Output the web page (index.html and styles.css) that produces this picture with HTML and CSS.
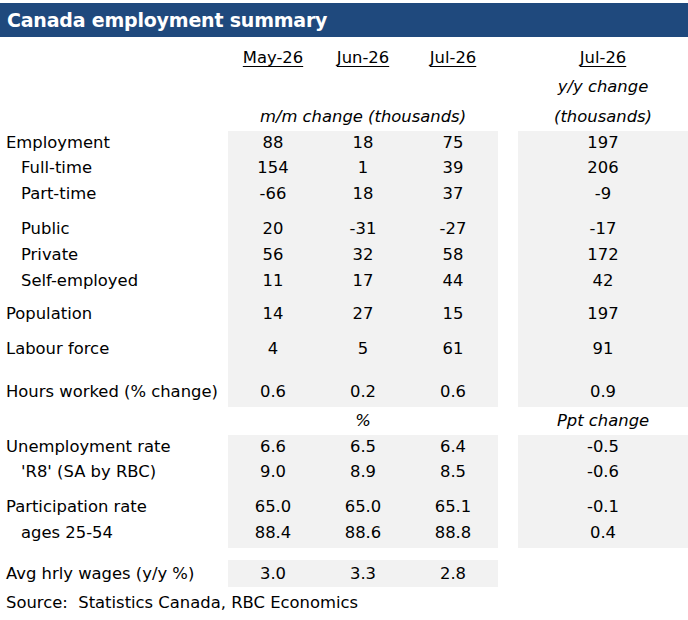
FILE: index.html
```html
<!DOCTYPE html>
<html lang="en">

<head>
    <meta charset="UTF-8">
    <meta name="viewport" content="width=device-width, initial-scale=1.0">
    <title>Canada employment summary</title>
    <link rel="stylesheet" href="styles.css">
</head>

<body>

    <div class="title">Canada employment summary</div>

    <!-- column headers -->
    <div class="row head h1">
        <div class="lbl"></div>
        <div><span class="ul">May-26</span></div>
        <div><span class="ul">Jun-26</span></div>
        <div><span class="ul">Jul-26</span></div>
        <div></div>
        <div><span class="ul">Jul-26</span></div>
    </div>
    <div class="row head h2">
        <div class="lbl"></div>
        <div class="span3"></div>
        <div></div>
        <div class="unit">y/y change</div>
    </div>
    <div class="row head h3">
        <div class="lbl"></div>
        <div class="span3 unit">m/m change (thousands)</div>
        <div></div>
        <div class="unit">(thousands)</div>
    </div>

    <!-- employment block -->
    <div class="row data tight">
        <div class="lbl">Employment</div>
        <div class="v">88</div><div class="v">18</div><div class="v">75</div>
        <div></div><div class="v">197</div>
    </div>
    <div class="row data">
        <div class="lbl sub">Full-time</div>
        <div class="v">154</div><div class="v">1</div><div class="v">39</div>
        <div></div><div class="v">206</div>
    </div>
    <div class="row data">
        <div class="lbl sub">Part-time</div>
        <div class="v">-66</div><div class="v">18</div><div class="v">37</div>
        <div></div><div class="v">-9</div>
    </div>
    <div class="row data sep">
        <div class="lbl sub">Public</div>
        <div class="v">20</div><div class="v">-31</div><div class="v">-27</div>
        <div></div><div class="v">-17</div>
    </div>
    <div class="row data">
        <div class="lbl sub">Private</div>
        <div class="v">56</div><div class="v">32</div><div class="v">58</div>
        <div></div><div class="v">172</div>
    </div>
    <div class="row data">
        <div class="lbl sub">Self-employed</div>
        <div class="v">11</div><div class="v">17</div><div class="v">44</div>
        <div></div><div class="v">42</div>
    </div>
    <div class="row data sep-sm">
        <div class="lbl">Population</div>
        <div class="v">14</div><div class="v">27</div><div class="v">15</div>
        <div></div><div class="v">197</div>
    </div>
    <div class="row data sep">
        <div class="lbl">Labour force</div>
        <div class="v">4</div><div class="v">5</div><div class="v">61</div>
        <div></div><div class="v">91</div>
    </div>
    <div class="row data sep-lg end">
        <div class="lbl">Hours worked (% change)</div>
        <div class="v">0.6</div><div class="v">0.2</div><div class="v">0.6</div>
        <div></div><div class="v">0.9</div>
    </div>

    <div class="row head pct">
        <div class="lbl"></div>
        <div class="span3 unit">%</div>
        <div></div>
        <div class="unit">Ppt change</div>
    </div>

    <!-- rates block -->
    <div class="row data tight">
        <div class="lbl">Unemployment rate</div>
        <div class="v">6.6</div><div class="v">6.5</div><div class="v">6.4</div>
        <div></div><div class="v">-0.5</div>
    </div>
    <div class="row data">
        <div class="lbl sub">'R8' (SA by RBC)</div>
        <div class="v">9.0</div><div class="v">8.9</div><div class="v">8.5</div>
        <div></div><div class="v">-0.6</div>
    </div>
    <div class="row data sep">
        <div class="lbl">Participation rate</div>
        <div class="v">65.0</div><div class="v">65.0</div><div class="v">65.1</div>
        <div></div><div class="v">-0.1</div>
    </div>
    <div class="row data end">
        <div class="lbl sub">ages 25-54</div>
        <div class="v">88.4</div><div class="v">88.6</div><div class="v">88.8</div>
        <div></div><div class="v">0.4</div>
    </div>

    <div class="row data wages">
        <div class="lbl">Avg hrly wages (y/y %)</div>
        <div class="v">3.0</div><div class="v">3.3</div><div class="v">2.8</div>
        <div></div><div></div>
    </div>

    <div class="source">Source:&nbsp; Statistics Canada, RBC Economics</div>

</body>

</html>
```

FILE: styles.css
```css
body {
    margin: 0;
    font-family: "DejaVu Sans", Verdana, sans-serif;
    font-size: 16.4px;
    color: #000;
    background: #fff;
    width: 688px;
}

.title {
    margin-top: 3px;
    height: 34px;
    line-height: 34px;
    padding-left: 7px;
    background: #1f497d;
    color: #fff;
    font-size: 19px;
    font-weight: bold;
    letter-spacing: -0.2px;
}

.row {
    display: grid;
    grid-template-columns: 228px 90px 90px 90px 20px 170px;
    line-height: 26px;
}

.row > div {
    text-align: center;
    white-space: nowrap;
}

.row > .lbl {
    text-align: left;
    padding-left: 6px;
}

.row > .lbl.sub {
    padding-left: 21px;
}

.span3 {
    grid-column: span 3;
}

.unit {
    font-style: italic;
}

.ul {
    text-decoration: underline;
    text-underline-offset: 3px;
    text-decoration-thickness: 1px;
}

/* header rows */
.h1 {
    margin-top: 8px;
}

.h2 > div {
    padding-top: 3px;
}

.h3 > div {
    padding-top: 4px;
    padding-bottom: 1px;
}

.pct {
    line-height: 28px;
}

/* data rows */
.data > .v {
    background: #f2f2f2;
}

.data.tight {
    line-height: 24px;
}

.data.sep > div {
    padding-top: 9px;
}

.data.sep-sm > div {
    padding-top: 7px;
}

.data.sep-lg > div {
    padding-top: 17px;
}

.data.end > div {
    padding-bottom: 2px;
}

.data.wages {
    margin-top: 12px;
    line-height: 27px;
}

.source {
    padding-top: 3px;
    padding-left: 6px;
    line-height: 26px;
}
```
